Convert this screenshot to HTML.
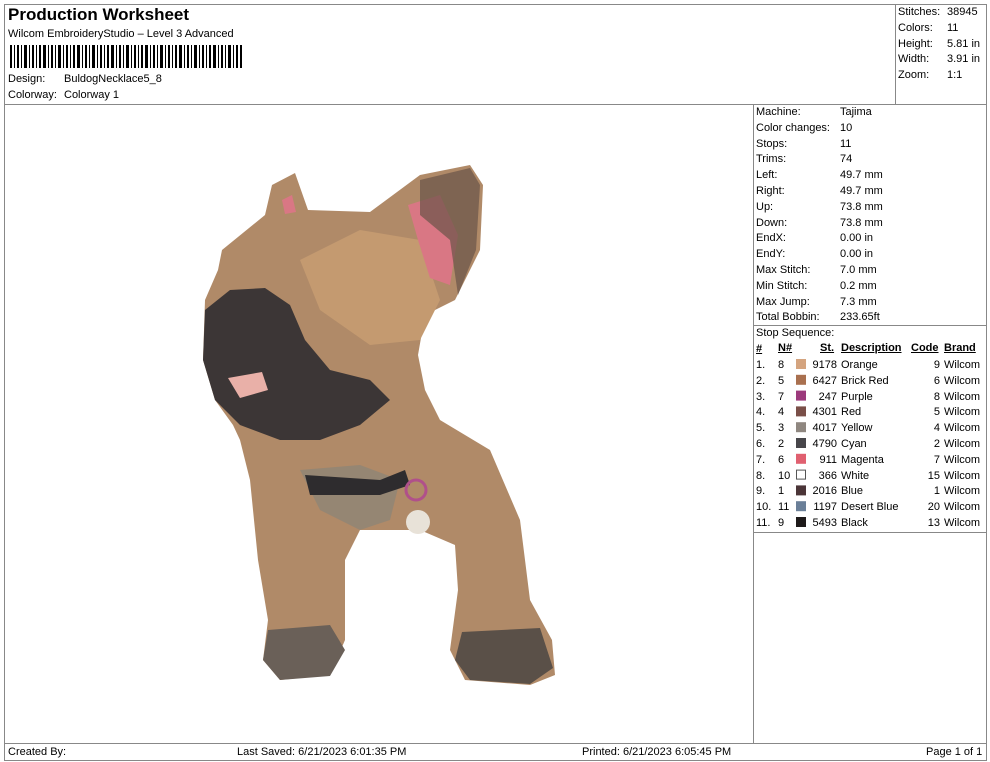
<!DOCTYPE html>
<html><head><meta charset="utf-8"><style>
body{margin:0;background:#fff;font-family:"Liberation Sans",Arial,sans-serif;font-size:11px;color:#000}
.a{position:absolute;white-space:nowrap}
.ln{position:absolute;background:#888}
</style></head><body>
<div style="position:relative;width:990px;height:762px;overflow:hidden">
<!-- frame -->
<div class="ln" style="left:4px;top:4px;width:983px;height:1px"></div>
<div class="ln" style="left:4px;top:4px;width:1px;height:757px"></div>
<div class="ln" style="left:986px;top:4px;width:1px;height:757px"></div>
<div class="ln" style="left:4px;top:760px;width:983px;height:1px"></div>
<div class="ln" style="left:4px;top:104px;width:983px;height:1px"></div>
<div class="ln" style="left:895px;top:4px;width:1px;height:100px"></div>
<div class="ln" style="left:753px;top:104px;width:1px;height:640px"></div>
<div class="ln" style="left:4px;top:743px;width:983px;height:1px"></div>
<div class="ln" style="left:753px;top:325px;width:234px;height:1px"></div>
<div class="ln" style="left:753px;top:532px;width:234px;height:1px"></div>

<div class="a" style="left:8px;top:5px;font-size:17px;font-weight:bold">Production Worksheet</div>
<div class="a" style="left:8px;top:28px">Wilcom EmbroideryStudio – Level 3 Advanced</div>
<svg class="a" style="left:10px;top:45px" width="232" height="23">
<g fill="#000">
<rect x="0" width="2" height="23"/><rect x="4" width="1" height="23"/><rect x="7" width="2" height="23"/><rect x="11" width="1" height="23"/><rect x="14" width="3" height="23"/><rect x="19" width="1" height="23"/><rect x="22" width="2" height="23"/><rect x="26" width="1" height="23"/><rect x="29" width="2" height="23"/><rect x="33" width="3" height="23"/><rect x="38" width="1" height="23"/><rect x="41" width="2" height="23"/><rect x="45" width="1" height="23"/><rect x="48" width="3" height="23"/><rect x="53" width="1" height="23"/><rect x="56" width="2" height="23"/><rect x="60" width="1" height="23"/><rect x="63" width="2" height="23"/><rect x="67" width="3" height="23"/><rect x="72" width="1" height="23"/><rect x="75" width="2" height="23"/><rect x="79" width="1" height="23"/><rect x="82" width="3" height="23"/><rect x="87" width="1" height="23"/><rect x="90" width="2" height="23"/><rect x="94" width="1" height="23"/><rect x="97" width="2" height="23"/><rect x="101" width="3" height="23"/><rect x="106" width="1" height="23"/><rect x="109" width="2" height="23"/><rect x="113" width="1" height="23"/><rect x="116" width="3" height="23"/><rect x="121" width="1" height="23"/><rect x="124" width="2" height="23"/><rect x="128" width="1" height="23"/><rect x="131" width="2" height="23"/><rect x="135" width="3" height="23"/><rect x="140" width="1" height="23"/><rect x="143" width="2" height="23"/><rect x="147" width="1" height="23"/><rect x="150" width="3" height="23"/><rect x="155" width="1" height="23"/><rect x="158" width="2" height="23"/><rect x="162" width="1" height="23"/><rect x="165" width="2" height="23"/><rect x="169" width="3" height="23"/><rect x="174" width="1" height="23"/><rect x="177" width="2" height="23"/><rect x="181" width="1" height="23"/><rect x="184" width="3" height="23"/><rect x="189" width="1" height="23"/><rect x="192" width="2" height="23"/><rect x="196" width="1" height="23"/><rect x="199" width="2" height="23"/><rect x="203" width="3" height="23"/><rect x="208" width="1" height="23"/><rect x="211" width="2" height="23"/><rect x="215" width="1" height="23"/><rect x="218" width="3" height="23"/><rect x="223" width="1" height="23"/><rect x="226" width="2" height="23"/><rect x="230" width="2" height="23"/>
</g></svg>
<div class="a" style="left:8px;top:73px">Design:</div><div class="a" style="left:64px;top:73px">BuldogNecklace5_8</div>
<div class="a" style="left:8px;top:89px">Colorway:</div><div class="a" style="left:64px;top:89px">Colorway 1</div>

<div class="a" style="left:898px;top:5px;line-height:15.8px">Stitches:<br>Colors:<br>Height:<br>Width:<br>Zoom:</div>
<div class="a" style="left:947px;top:5px;line-height:15.8px">38945<br>11<br>5.81 in<br>3.91 in<br>1:1</div>

<div class="a" style="left:756px;top:105px;line-height:15.8px">Machine:<br>Color changes:<br>Stops:<br>Trims:<br>Left:<br>Right:<br>Up:<br>Down:<br>EndX:<br>EndY:<br>Max Stitch:<br>Min Stitch:<br>Max Jump:<br>Total Bobbin:<br>Stop Sequence:</div>
<div class="a" style="left:840px;top:105px;line-height:15.8px">Tajima<br>10<br>11<br>74<br>49.7 mm<br>49.7 mm<br>73.8 mm<br>73.8 mm<br>0.00 in<br>0.00 in<br>7.0 mm<br>0.2 mm<br>7.3 mm<br>233.65ft</div>

<div class="a" style="left:756px;top:342px;line-height:15.8px;font-weight:bold;text-decoration:underline">#</div>
<div class="a" style="left:778px;top:342px;font-weight:bold;text-decoration:underline">N#</div>
<div class="a" style="left:820px;top:342px;font-weight:bold;text-decoration:underline">St.</div>
<div class="a" style="left:841px;top:342px;font-weight:bold;text-decoration:underline">Description</div>
<div class="a" style="left:911px;top:342px;font-weight:bold;text-decoration:underline">Code</div>
<div class="a" style="left:944px;top:342px;font-weight:bold;text-decoration:underline">Brand</div>
<div class="a" style="left:756px;top:358px;line-height:15.8px">1.<br>2.<br>3.<br>4.<br>5.<br>6.<br>7.<br>8.<br>9.<br>10.<br>11.</div>
<div class="a" style="left:778px;top:358px;line-height:15.8px">8<br>5<br>7<br>4<br>3<br>2<br>6<br>10<br>1<br>11<br>9</div>
<div class="a" style="left:808px;top:358px;line-height:15.8px;text-align:right;width:29px">9178<br>6427<br>247<br>4301<br>4017<br>4790<br>911<br>366<br>2016<br>1197<br>5493</div>
<div class="a" style="left:841px;top:358px;line-height:15.8px">Orange<br>Brick Red<br>Purple<br>Red<br>Yellow<br>Cyan<br>Magenta<br>White<br>Blue<br>Desert Blue<br>Black</div>
<div class="a" style="left:900px;top:358px;line-height:15.8px;text-align:right;width:40px">9<br>6<br>8<br>5<br>4<br>2<br>7<br>15<br>1<br>20<br>13</div>
<div class="a" style="left:944px;top:358px;line-height:15.8px">Wilcom<br>Wilcom<br>Wilcom<br>Wilcom<br>Wilcom<br>Wilcom<br>Wilcom<br>Wilcom<br>Wilcom<br>Wilcom<br>Wilcom</div>
<svg class="a" style="left:795px;top:358px" width="12" height="175">
<rect x="1" y="1" width="10" height="10" fill="#d4a47f"/>
<rect x="1" y="16.8" width="10" height="10" fill="#a9704f"/>
<rect x="1" y="32.6" width="10" height="10" fill="#9c3a7c"/>
<rect x="1" y="48.4" width="10" height="10" fill="#7a4f48"/>
<rect x="1" y="64.2" width="10" height="10" fill="#8f8780"/>
<rect x="1" y="80" width="10" height="10" fill="#47464a"/>
<rect x="1" y="95.8" width="10" height="10" fill="#e06070"/>
<rect x="1.5" y="112.1" width="9" height="9" fill="#fff" stroke="#555"/>
<rect x="1" y="127.4" width="10" height="10" fill="#4b3538"/>
<rect x="1" y="143.2" width="10" height="10" fill="#6a7f98"/>
<rect x="1" y="159" width="10" height="10" fill="#1e1a1a"/>
</svg>

<!-- dog -->
<svg class="a" style="left:0;top:0" width="753" height="743">
<path d="M265,215 L272,185 L295,173 L308,210 L370,212 L420,175 L470,165 L483,185 L480,250 L455,300 L425,315 L418,355 L425,390 L440,420 L490,450 L520,520 L530,600 L552,640 L555,675 L530,685 L465,680 L450,650 L458,590 L455,545 L420,530 L360,530 L345,560 L345,640 L330,675 L280,680 L263,660 L268,620 L258,560 L250,480 L240,440 L233,425 L215,400 L203,360 L205,300 L218,270 L222,250 Z" fill="#b08a68"/>
<path d="M300,260 L360,230 L420,240 L440,300 L420,340 L370,345 L320,310 Z" fill="#c49a70"/>
<path d="M205,310 L230,290 L265,288 L290,305 L305,340 L330,370 L370,380 L390,400 L360,425 L320,440 L280,440 L240,425 L215,400 L203,360 Z" fill="#3c3636"/>
<path d="M228,378 L262,372 L268,390 L240,398 Z" fill="#e9b0a8"/>
<path d="M408,205 L440,195 L458,235 L450,285 L430,278 L418,240 Z" fill="#d97784"/>
<path d="M282,200 L292,195 L296,212 L285,214 Z" fill="#d97784"/>
<path d="M420,180 L470,168 L480,185 L476,250 L458,295 L450,240 L420,215 Z" fill="#6a5448" opacity=".7"/>
<path d="M300,470 L360,465 L400,480 L390,520 L360,530 L320,510 Z" fill="#8a8478" opacity=".7"/>
<path d="M462,632 L540,628 L553,668 L530,684 L470,680 L455,660 Z" fill="#5a5048"/>
<path d="M268,630 L330,625 L345,650 L330,676 L280,680 L263,660 Z" fill="#6a6058"/>
<path d="M305,475 L380,480 L405,470 L410,485 L380,495 L310,495 Z" fill="#2e2c2e"/>
<circle cx="416" cy="490" r="10" fill="none" stroke="#b0508a" stroke-width="3"/>
<circle cx="418" cy="522" r="12" fill="#e8e2d8"/>
</svg>

<div class="a" style="left:8px;top:746px">Created By:</div>
<div class="a" style="left:237px;top:746px">Last Saved: 6/21/2023 6:01:35 PM</div>
<div class="a" style="left:582px;top:746px">Printed: 6/21/2023 6:05:45 PM</div>
<div class="a" style="left:926px;top:746px">Page 1 of 1</div>
</div>
</body></html>
